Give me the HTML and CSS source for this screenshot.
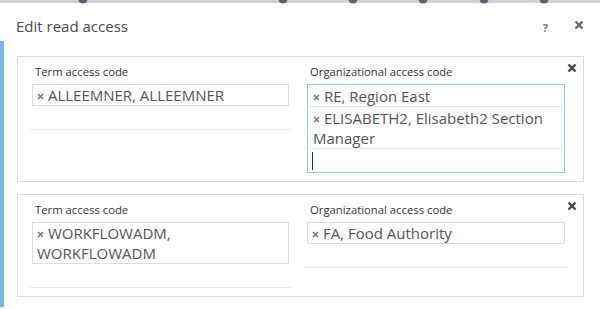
FILE: index.html
```html
<!DOCTYPE html>
<html lang="en">
<head>
  <meta charset="UTF-8">
  <title>Edit read access</title>
  <link rel="stylesheet" href="styles.css">
</head>
<body>
  <svg class="backdrop" width="600" height="4" viewBox="0 0 600 4">
    <rect x="0" y="0" width="600" height="3" fill="#cfd1d2"/>
    <circle cx="83" cy="-1" r="4.5" fill="#4d6670"/>
    <circle cx="283" cy="-1" r="4.5" fill="#4d6670"/>
    <circle cx="353" cy="-1" r="4.5" fill="#4d6670"/>
    <circle cx="423" cy="-1" r="4.5" fill="#4d6670"/>
    <circle cx="484" cy="-1" r="4.5" fill="#4d6670"/>
    <circle cx="544" cy="-1" r="4.5" fill="#4d6670"/>
  </svg>

  <div class="dialog">
    <div class="dialog-header">
      <h1 class="dialog-title">Edit read access</h1>
      <span class="help">?</span>
      <svg class="close" width="10" height="10" viewBox="0 0 10 10"><path d="M1.5 1.5 L8.5 8.5 M8.5 1.5 L1.5 8.5" stroke="#666" stroke-width="2.4"/></svg>
    </div>

    <div class="dialog-body">
      <div class="rule-card">
        <svg class="remove" width="10" height="10" viewBox="0 0 10 10"><path d="M1.5 1.5 L8.5 8.5 M8.5 1.5 L1.5 8.5" stroke="#444" stroke-width="2.4"/></svg>
        <div class="field">
          <label class="field-label">Term access code</label>
          <div class="picker">
            <div class="token"><svg class="x" width="7" height="7" viewBox="0 0 7 7"><path d="M1 1 L6 6 M6 1 L1 6" stroke="#7a7a7a" stroke-width="1.6"/></svg> ALLEEMNER, ALLEEMNER</div>
          </div>
          <div class="field-rule"></div>
        </div>
        <div class="field">
          <label class="field-label">Organizational access code</label>
          <div class="picker focused">
            <div class="token boxed"><svg class="x" width="7" height="7" viewBox="0 0 7 7"><path d="M1 1 L6 6 M6 1 L1 6" stroke="#7a7a7a" stroke-width="1.6"/></svg> RE, Region East</div>
            <div class="token boxed"><svg class="x" width="7" height="7" viewBox="0 0 7 7"><path d="M1 1 L6 6 M6 1 L1 6" stroke="#7a7a7a" stroke-width="1.6"/></svg> ELISABETH2, Elisabeth2 Section Manager</div>
            <div class="typing"><span class="caret"></span></div>
          </div>
        </div>
      </div>

      <div class="rule-card">
        <svg class="remove" width="10" height="10" viewBox="0 0 10 10"><path d="M1.5 1.5 L8.5 8.5 M8.5 1.5 L1.5 8.5" stroke="#444" stroke-width="2.4"/></svg>
        <div class="field">
          <label class="field-label">Term access code</label>
          <div class="picker">
            <div class="token"><svg class="x" width="7" height="7" viewBox="0 0 7 7"><path d="M1 1 L6 6 M6 1 L1 6" stroke="#7a7a7a" stroke-width="1.6"/></svg> WORKFLOWADM, WORKFLOWADM</div>
          </div>
          <div class="field-rule"></div>
        </div>
        <div class="field">
          <label class="field-label">Organizational access code</label>
          <div class="picker">
            <div class="token"><svg class="x" width="7" height="7" viewBox="0 0 7 7"><path d="M1 1 L6 6 M6 1 L1 6" stroke="#7a7a7a" stroke-width="1.6"/></svg> FA, Food Authority</div>
          </div>
          <div class="field-rule"></div>
        </div>
      </div>
    </div>
  </div>
</body>
</html>
```

FILE: styles.css
```css
body {
  margin: 0;
  background: #fff;
  font-family: "Open Sans", "Noto Sans", sans-serif;
  color: #444;
  width: 600px;
  height: 309px;
  overflow: hidden;
}
.backdrop {
  display: block;
}
.dialog-header {
  display: flex;
  align-items: baseline;
  height: 25px;
  padding: 12px 16px 0 16px;
}
.dialog-title {
  flex: 1;
  margin: 0;
  font-size: 15px;
  line-height: 20px;
  font-weight: normal;
  color: #4a4a4a;
}
.help {
  font-size: 11px;
  font-weight: bold;
  color: #777;
  margin-right: 26px;
}
.close {
  align-self: flex-start;
  margin-top: 4px;
}
.dialog-body {
  border-left: 4px solid #7db4e4;
  padding: 15px 16px 10px 13px;
  display: flex;
  flex-direction: column;
  gap: 12px;
}
.rule-card {
  position: relative;
  border: 1px solid #ddd;
  padding: 7px 19px 8px 14px;
  display: grid;
  grid-template-columns: 257px 258px;
  column-gap: 18px;
  align-items: start;
}
.remove {
  position: absolute;
  right: 6px;
  top: 6px;
}
.field-label {
  display: block;
  font-size: 11.3px;
  line-height: 16px;
  color: #333;
  padding: 0 0 4px 3px;
}
.picker {
  border: 1px solid #ddd;
  font-size: 15px;
  line-height: 20px;
  color: #555;
}
.picker.focused {
  border-color: #8ccaf0;
  padding: 0 1px;
}
.token {
  padding: 0 4px;
}
.token.boxed {
  border-bottom: 1px solid #e6e6e6;
  line-height: 20px;
  padding-top: 1px;
}
.x {
  vertical-align: 1px;
}
.typing {
  height: 23px;
  display: flex;
  align-items: center;
  padding-left: 3px;
}
.caret {
  width: 1px;
  height: 18px;
  background: #333;
}
.field-rule {
  border-top: 1px solid #ebebeb;
  margin: 23px -2px 0 -2px;
}
```
